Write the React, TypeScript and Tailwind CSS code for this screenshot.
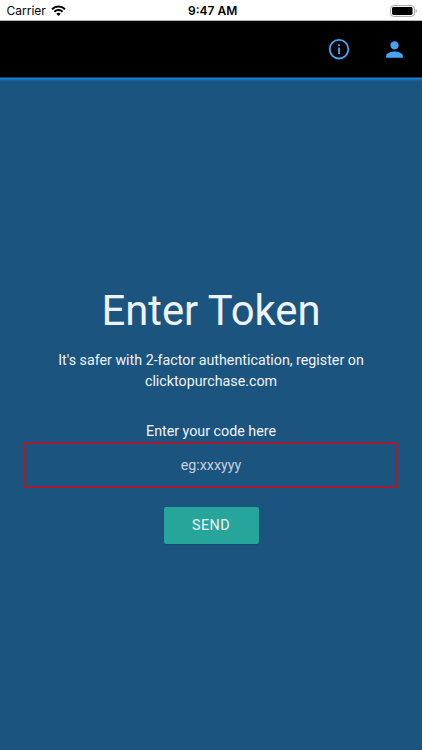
import { MdPerson } from "react-icons/md";

function StatusBar() {
  return (
    <div className="relative flex h-[21px] items-center justify-between border-b border-[#b5b5b5] bg-white pl-[6.5px] pr-[4px] pt-[1px] font-['Inter',sans-serif] text-black">
      <div className="flex items-center gap-[5px]">
        <span className="pt-px text-[12px] leading-none">Carrier</span>
        <svg className="h-[11px] w-[15px]" viewBox="0 0 15 11" fill="none" stroke="black" strokeWidth="2">
          <path d="M1 4.2a9.2 9.2 0 0 1 13 0" />
          <path d="M3.4 6.8a5.8 5.8 0 0 1 8.2 0" />
          <path d="M7.5 11 5.3 8.8a3.1 3.1 0 0 1 4.4 0z" fill="black" stroke="none" />
        </svg>
      </div>
      <span className="absolute left-[188px] top-[5px] whitespace-nowrap text-[12px] font-semibold leading-none">9:47 AM</span>
      <svg className="h-[12px] w-[28px]" viewBox="0 0 28 12">
        <rect x="0.6" y="0.6" width="23.8" height="10.8" rx="2.8" fill="none" stroke="#a6a6a6" />
        <rect x="2" y="2" width="20.5" height="8" rx="1.4" />
        <path d="M25.6 4a2.2 2.2 0 0 1 0 4z" fill="#a6a6a6" />
      </svg>
    </div>
  );
}

function InfoIcon() {
  return (
    <svg className="h-6 w-6" viewBox="0 0 24 24" fill="none" stroke="currentColor">
      <circle cx="12" cy="12.2" r="9.3" strokeWidth="1.8" />
      <path d="M12 10.6v6.4M12 7.2v1.9" strokeWidth="1.8" />
    </svg>
  );
}

export default function App() {
  return (
    <div className="flex h-[750px] w-[422px] flex-col overflow-hidden bg-[#1c5480] font-['Roboto',sans-serif] text-[#eef3f7]">
      <StatusBar />
      <header className="flex h-[57px] items-center justify-end gap-[31px] border-b border-[#0b3a63] bg-black pr-[15px] text-[#45a5f5] shadow-[0_1px_1px_#1487dc,0_2px_2px_#1675bd]">
        <button aria-label="Information">
          <InfoIcon />
        </button>
        <button aria-label="Account">
          <MdPerson className="h-[25px] w-[25px]" />
        </button>
      </header>

      <main className="flex flex-col items-center px-6 pt-[208px]">
        <h1 className="text-[41.8px] leading-[50px]">Enter Token</h1>
        <p className="mt-[14px] text-center text-[14.25px] leading-[21px]">
          It's safer with 2-factor authentication, register on
          <br />
          clicktopurchase.com
        </p>
        <label htmlFor="token" className="mt-[29px] text-[14.25px] leading-[21px]">
          Enter your code here
        </label>
        <input
          id="token"
          placeholder="eg:xxxyyy"
          className="h-[46px] w-full border-2 border-[#a31d2f] bg-transparent text-center text-[14.25px] outline-none placeholder:text-[#c5d1dc]"
        />
        <button className="mt-[19px] h-[37px] w-[95px] rounded-[2px] bg-[#26a69a] text-[14.3px] tracking-[0.5px] shadow-[0_1px_2px_rgba(0,0,0,0.14)]">
          SEND
        </button>
      </main>
    </div>
  );
}
